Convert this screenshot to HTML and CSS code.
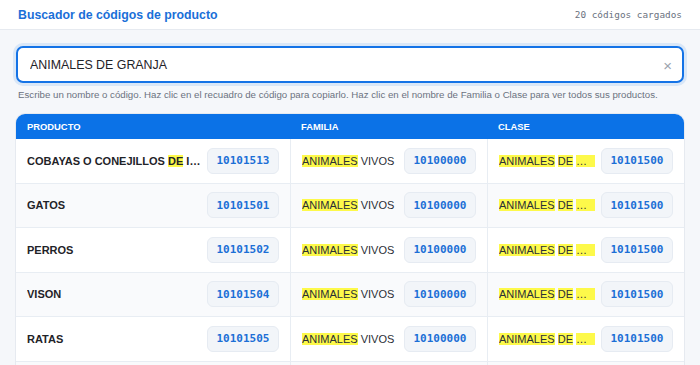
FILE: index.html
```html
<!DOCTYPE html>
<html lang="es">
<head>
  <meta charset="UTF-8">
  <meta name="viewport" content="width=device-width, initial-scale=1.0">
  <title>Buscador de códigos de producto</title>
  <link rel="stylesheet" href="styles.css">
</head>
<body>
  <header class="topbar">
    <h1 class="title">Buscador de códigos de producto</h1>
    <span class="count">20 códigos cargados</span>
  </header>

  <main class="main">
    <div class="search">
      <input class="search-input" type="text" value="ANIMALES DE GRANJA">
      <span class="clear">×</span>
    </div>
    <p class="hint">Escribe un nombre o código. Haz clic en el recuadro de código para copiarlo. Haz clic en el nombre de Familia o Clase para ver todos sus productos.</p>

    <table class="results">
      <colgroup>
        <col class="col-prod">
        <col>
        <col>
      </colgroup>
      <thead>
        <tr><th>Producto</th><th>Familia</th><th>Clase</th></tr>
      </thead>
      <tbody>
        <tr>
          <td><div class="cell"><span class="name prod">COBAYAS O CONEJILLOS <mark>DE</mark> INDIAS</span><button class="code">10101513</button></div></td>
          <td><div class="cell"><span class="name"><mark>ANIMALES</mark> VIVOS</span><button class="code">10100000</button></div></td>
          <td><div class="cell"><span class="name"><mark>ANIMALES</mark> <mark>DE</mark> <mark>GRANJA</mark></span><button class="code">10101500</button></div></td>
        </tr>
        <tr>
          <td><div class="cell"><span class="name prod">GATOS</span><button class="code">10101501</button></div></td>
          <td><div class="cell"><span class="name"><mark>ANIMALES</mark> VIVOS</span><button class="code">10100000</button></div></td>
          <td><div class="cell"><span class="name"><mark>ANIMALES</mark> <mark>DE</mark> <mark>GRANJA</mark></span><button class="code">10101500</button></div></td>
        </tr>
        <tr>
          <td><div class="cell"><span class="name prod">PERROS</span><button class="code">10101502</button></div></td>
          <td><div class="cell"><span class="name"><mark>ANIMALES</mark> VIVOS</span><button class="code">10100000</button></div></td>
          <td><div class="cell"><span class="name"><mark>ANIMALES</mark> <mark>DE</mark> <mark>GRANJA</mark></span><button class="code">10101500</button></div></td>
        </tr>
        <tr>
          <td><div class="cell"><span class="name prod">VISON</span><button class="code">10101504</button></div></td>
          <td><div class="cell"><span class="name"><mark>ANIMALES</mark> VIVOS</span><button class="code">10100000</button></div></td>
          <td><div class="cell"><span class="name"><mark>ANIMALES</mark> <mark>DE</mark> <mark>GRANJA</mark></span><button class="code">10101500</button></div></td>
        </tr>
        <tr>
          <td><div class="cell"><span class="name prod">RATAS</span><button class="code">10101505</button></div></td>
          <td><div class="cell"><span class="name"><mark>ANIMALES</mark> VIVOS</span><button class="code">10100000</button></div></td>
          <td><div class="cell"><span class="name"><mark>ANIMALES</mark> <mark>DE</mark> <mark>GRANJA</mark></span><button class="code">10101500</button></div></td>
        </tr>
        <tr>
          <td><div class="cell"><span class="name prod">RATONES</span><button class="code">10101506</button></div></td>
          <td><div class="cell"><span class="name"><mark>ANIMALES</mark> VIVOS</span><button class="code">10100000</button></div></td>
          <td><div class="cell"><span class="name"><mark>ANIMALES</mark> <mark>DE</mark> <mark>GRANJA</mark></span><button class="code">10101500</button></div></td>
        </tr>
      </tbody>
    </table>
  </main>
</body>
</html>
```

FILE: styles.css
```css
html, body {
  margin: 0;
}
body {
  background: #f5f7fa;
  font-family: "Liberation Sans", Arial, sans-serif;
  color: #1f2328;
}

.topbar {
  display: flex;
  justify-content: space-between;
  align-items: center;
  height: 29px;
  padding: 0 18px;
  background: #fff;
  border-bottom: 1px solid #e6eaf0;
}
.title {
  margin: 0;
  font-size: 12.3px;
  font-weight: bold;
  color: #1a6fd8;
}
.count {
  font-family: "DejaVu Sans Mono", "Liberation Mono", monospace;
  font-size: 9.4px;
  color: #6b7280;
}

.main {
  padding: 16px 16px 0;
}

.search {
  position: relative;
}
.search-input {
  display: block;
  width: 100%;
  height: 37px;
  box-sizing: border-box;
  padding: 0 30px 0 12px;
  border: 2px solid #1473e6;
  border-radius: 7px;
  box-shadow: 0 0 0 3px rgba(20, 115, 230, 0.12);
  font-family: "Liberation Sans", Arial, sans-serif;
  font-size: 12.4px;
  color: #1f2328;
  background: #fff;
  outline: none;
}
.clear {
  position: absolute;
  right: 12px;
  top: 50%;
  transform: translateY(-50%);
  font-size: 15px;
  color: #9aa3ae;
}

.hint {
  margin: 6px 2px 0;
  font-size: 9.7px;
  color: #6b7280;
}

.results {
  width: 100%;
  margin-top: 14px;
  border-collapse: separate;
  border-spacing: 0;
  table-layout: fixed;
  background: #fff;
  border-radius: 9px 9px 0 0;
  box-shadow: 0 0 0 1px #e6eaf0;
}
.col-prod {
  width: 274px;
}
.results th {
  height: 25px;
  padding: 0 11px;
  text-align: left;
  font-size: 9.4px;
  font-weight: bold;
  text-transform: uppercase;
  color: #fff;
  background: #0b72e7;
}
.results th:first-child {
  border-top-left-radius: 9px;
}
.results th:last-child {
  border-top-right-radius: 9px;
}
.results td {
  height: 44.5px;
  padding: 0 11px;
  box-sizing: border-box;
  border-bottom: 1px solid #e8edf3;
  border-left: 1px solid #e8edf3;
}
.results td:first-child {
  border-left: none;
}
.results tbody tr:nth-child(even) td {
  background: #f9fafc;
}

.cell {
  display: flex;
  align-items: center;
  gap: 6px;
}
.name {
  flex: 1;
  min-width: 0;
  overflow: hidden;
  white-space: nowrap;
  text-overflow: ellipsis;
  font-size: 11px;
  color: #2b2f36;
}
.name.prod {
  font-weight: bold;
  color: #1f2328;
}
mark {
  background: #fdf94a;
  color: inherit;
}

.code {
  flex: none;
  width: 72px;
  height: 26px;
  padding: 0;
  border: 1px solid #e6ebf2;
  border-radius: 6px;
  background: #f2f5f9;
  font-family: "DejaVu Sans Mono", "Liberation Mono", monospace;
  font-size: 11px;
  font-weight: bold;
  color: #1c6fd6;
  cursor: pointer;
}
```
